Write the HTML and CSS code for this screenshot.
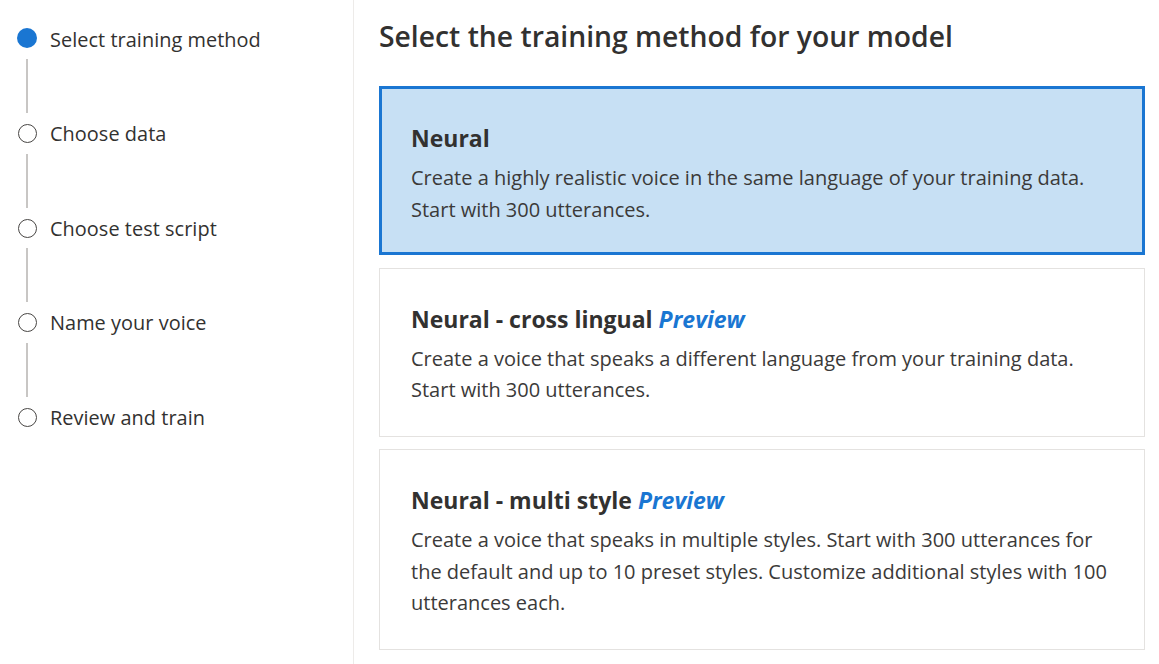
FILE: index.html
```html
<!DOCTYPE html>
<html lang="en">
<head>
<meta charset="utf-8">
<title>Select training method</title>
<link rel="stylesheet" href="styles.css">
</head>
<body>
<div class="page">
  <nav class="sidebar">
    <ol class="steps">
      <li class="step active"><span class="marker"></span><span class="label">Select training method</span></li>
      <li class="connector"><span class="line"></span></li>
      <li class="step"><span class="marker"></span><span class="label">Choose data</span></li>
      <li class="connector"><span class="line"></span></li>
      <li class="step"><span class="marker"></span><span class="label">Choose test script</span></li>
      <li class="connector"><span class="line"></span></li>
      <li class="step"><span class="marker"></span><span class="label">Name your voice</span></li>
      <li class="connector"><span class="line"></span></li>
      <li class="step"><span class="marker"></span><span class="label">Review and train</span></li>
    </ol>
  </nav>
  <main class="main">
    <h1 class="heading">Select the training method for your model</h1>
    <div class="cards">
      <div class="card selected">
        <h2 class="card-title">Neural</h2>
        <p class="card-desc">Create a highly realistic voice in the same language of your training data.<br>Start with 300 utterances.</p>
      </div>
      <div class="card">
        <h2 class="card-title">Neural - cross lingual <em class="preview">Preview</em></h2>
        <p class="card-desc">Create a voice that speaks a different language from your training data.<br>Start with 300 utterances.</p>
      </div>
      <div class="card">
        <h2 class="card-title">Neural - multi style <em class="preview">Preview</em></h2>
        <p class="card-desc">Create a voice that speaks in multiple styles. Start with 300 utterances for the default and up to 10 preset styles. Customize additional styles with 100 utterances each.</p>
      </div>
    </div>
  </main>
</div>
</body>
</html>
```

FILE: styles.css
```css
* { box-sizing: border-box; }
html, body { margin: 0; padding: 0; }
body {
  font-family: "Open Sans", "Noto Sans", sans-serif;
  color: #323130;
  background: #ffffff;
  overflow: hidden;
}
.page {
  display: flex;
  height: 664px;
}
.sidebar {
  width: 354px;
  flex: none;
  border-right: 1px solid #edebe9;
}
.steps {
  list-style: none;
  margin: 0;
  padding: 23px 0 0 17px;
}
.step {
  display: flex;
  align-items: center;
  height: 32px;
}
.marker {
  width: 20px;
  display: flex;
  justify-content: center;
  flex: none;
}
.marker::before {
  content: "";
  display: block;
  width: 17px;
  height: 17px;
  border: 1px solid #484644;
  border-radius: 50%;
}
.step.active .marker::before {
  width: 20px;
  height: 20px;
  border: none;
  background: #1a76d2;
  margin-top: -3px;
}
.label {
  margin-left: 13px;
  font-size: 19.9px;
  font-weight: 400;
  color: #323130;
  white-space: nowrap;
  letter-spacing: 0.05px;
}
.connector {
  height: 62.5px;
  padding: 4px 0 0 9px;
}
.line {
  display: block;
  width: 2px;
  height: 54px;
  background: #c8c6c4;
}
.main {
  flex: 1;
  padding: 16px 14px 0 25px;
}
.heading {
  margin: 0;
  font-size: 28.3px;
  font-weight: 600;
  line-height: 40px;
  color: #323130;
}
.cards {
  display: flex;
  flex-direction: column;
  gap: 12.5px;
  margin-top: 30px;
}
.card {
  border: 1px solid #e4e2e0;
  background: #ffffff;
  padding: 34px 37px 30px 31px;
}
.card.selected {
  border: 3px solid #1a76d2;
  background: #c7e0f4;
  padding: 33px 35px 27px 29px;
}
.card-title {
  margin: 0;
  font-size: 23px;
  font-weight: 700;
  line-height: 32px;
  color: #323130;
}
.preview {
  color: #1a76d2;
  font-style: italic;
  font-weight: 700;
}
.card-desc {
  margin: 8px 0 0;
  font-size: 20px;
  line-height: 31.5px;
  color: #3b3a39;
}
```
